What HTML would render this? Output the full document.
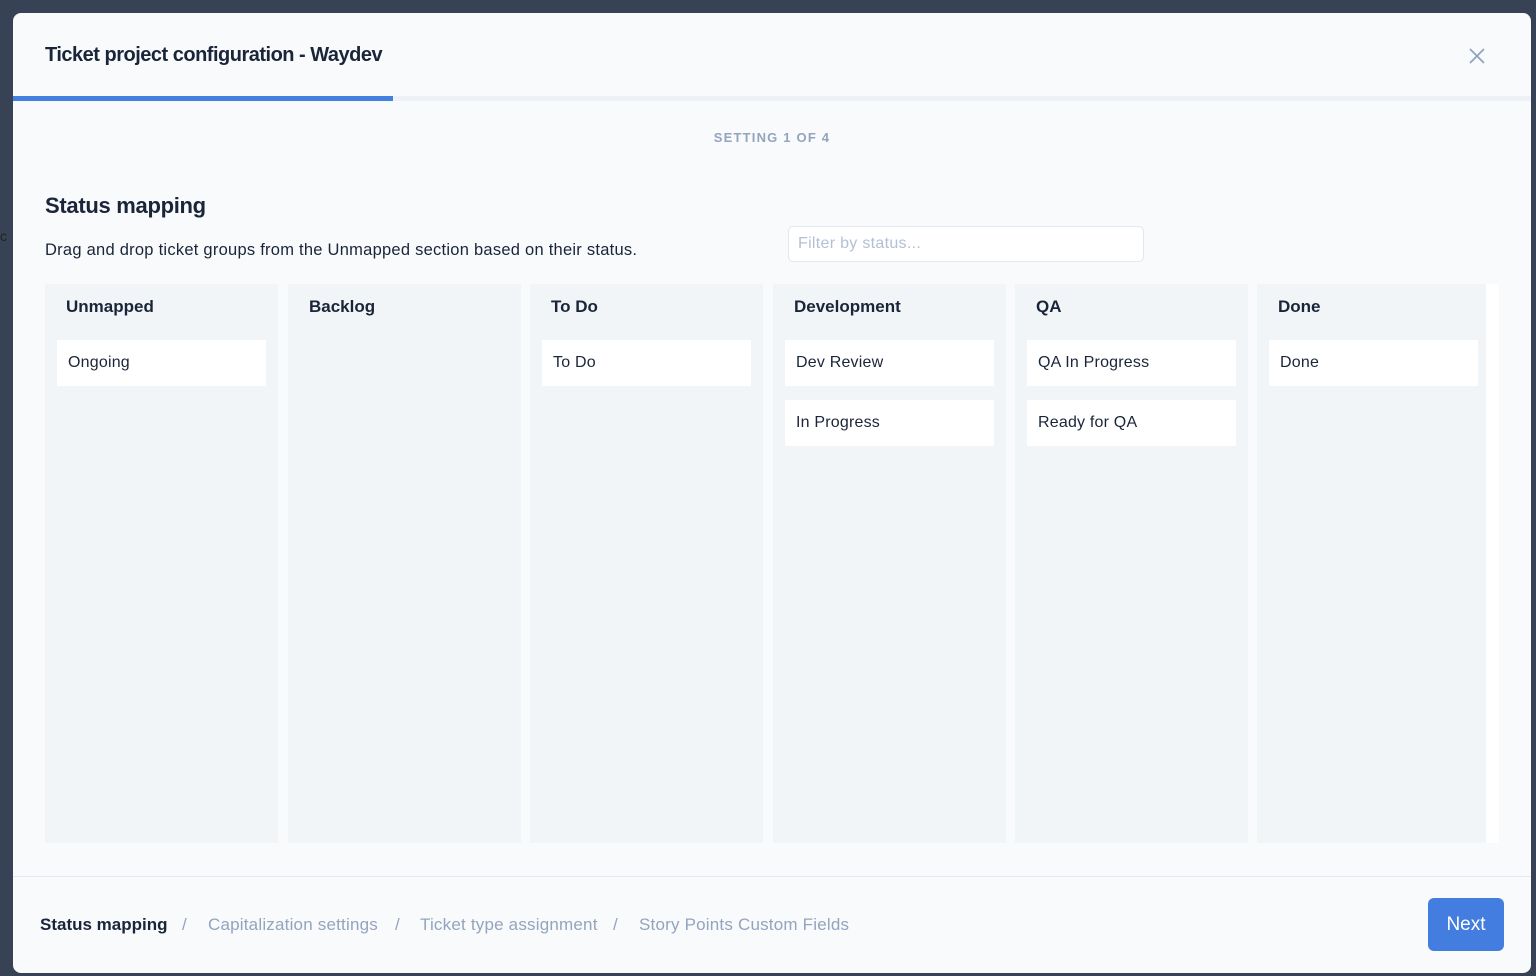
<!DOCTYPE html>
<html><head><meta charset="utf-8"><style>
*{box-sizing:border-box;margin:0;padding:0}
body{width:1536px;height:976px;background:#374355;font-family:"Liberation Sans",sans-serif;position:relative;overflow:hidden;color:#1a2539}
.modal{position:absolute;left:13px;top:13px;width:1518px;height:960px;background:#f8fafc;border-radius:8px;overflow:hidden}
.a{position:absolute;white-space:nowrap}
.col{position:absolute;top:271px;height:559px;background:#f2f5f8;width:233px}
.col h3{position:absolute;left:21px;top:13px;font-size:17px;font-weight:bold;color:#1a2539}
.card{position:absolute;left:12px;width:209px;height:46px;background:#fff;font-size:16px;padding:14px 11px 0;color:#1a2539;letter-spacing:0.2px}
.f{position:absolute;top:902px;font-size:17px;color:#94a4bd;white-space:nowrap}
</style></head><body>
<div class="a" style="left:0;top:228px;font-size:14px;color:#222">c</div>
<div class="modal">
<div class="a" style="left:32px;top:31px;font-size:20px;font-weight:bold;color:#1a2539;letter-spacing:-0.5px">Ticket project configuration - Waydev</div>
<svg class="a" style="left:1456px;top:35px" width="16" height="16" viewBox="0 0 16 16"><path d="M1 1L15 15M15 1L1 15" stroke="#93a3bd" stroke-width="1.8"/></svg>
<div class="a" style="left:0;top:83px;width:1518px;height:5px;background:#eef2f8"></div>
<div class="a" style="left:0;top:83px;width:380px;height:5px;background:#4380e0"></div>
<div class="a" style="left:0;top:117px;width:1518px;text-align:center;font-size:13px;font-weight:bold;color:#94a4bd;letter-spacing:1.2px">SETTING 1 OF 4</div>
<div class="a" style="left:32px;top:180px;font-size:22px;font-weight:bold;color:#1a2539;letter-spacing:-0.3px">Status mapping</div>
<div class="a" style="left:32px;top:228px;font-size:16.5px;color:#1a2539;letter-spacing:0.25px">Drag and drop ticket groups from the Unmapped section based on their status.</div>
<div class="a" style="left:775px;top:213px;width:356px;height:36px;background:#fff;border:1px solid #e2e8f0;border-radius:5px;font-size:16px;color:#b3c0d4;padding:8px 9px;letter-spacing:0.3px">Filter by status...</div>
<div class="a" style="left:1473px;top:271px;width:13px;height:559px;background:#fff"></div>
<div class="col" style="left:32px"><h3>Unmapped</h3><div class="card" style="top:56px">Ongoing</div></div>
<div class="col" style="left:275px"><h3>Backlog</h3></div>
<div class="col" style="left:517px"><h3>To Do</h3><div class="card" style="top:56px">To Do</div></div>
<div class="col" style="left:760px"><h3>Development</h3><div class="card" style="top:56px">Dev Review</div><div class="card" style="top:116px">In Progress</div></div>
<div class="col" style="left:1002px"><h3>QA</h3><div class="card" style="top:56px">QA In Progress</div><div class="card" style="top:116px">Ready for QA</div></div>
<div class="col" style="left:1244px;width:229px"><h3>Done</h3><div class="card" style="top:56px">Done</div></div>
<div class="a" style="left:0;top:863px;width:1518px;height:1px;background:#e3e9f2"></div>
<div class="f" style="left:27px;color:#1a2539;font-weight:bold">Status mapping</div>
<div class="f" style="left:169px">/</div>
<div class="f" style="left:195px;letter-spacing:0.2px">Capitalization settings</div>
<div class="f" style="left:382px">/</div>
<div class="f" style="left:407px;letter-spacing:0.2px">Ticket type assignment</div>
<div class="f" style="left:600px">/</div>
<div class="f" style="left:626px;letter-spacing:0.2px">Story Points Custom Fields</div>
<div class="a" style="left:1415px;top:885px;width:76px;height:53px;background:#437ddf;border-radius:6px;color:#fff;font-size:19px;text-align:center;line-height:53px">Next</div>
</div>
</body></html>
